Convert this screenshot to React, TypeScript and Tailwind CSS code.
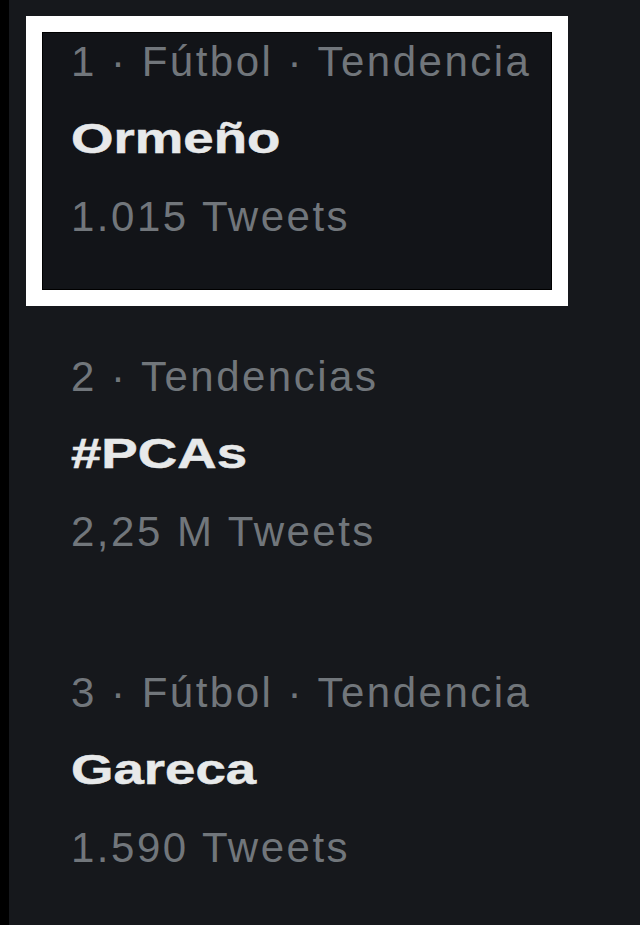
import * as React from 'react'

type Trend = {
  meta: string
  name: string
  count: string
}

const TRENDS: Trend[] = [
  { meta: '1 · Fútbol · Tendencia', name: 'Ormeño', count: '1.015 Tweets' },
  { meta: '2 · Tendencias', name: '#PCAs', count: '2,25 M Tweets' },
  { meta: '3 · Fútbol · Tendencia', name: 'Gareca', count: '1.590 Tweets' },
]

function TrendItem({ trend }: { trend: Trend }) {
  return (
    <div className="flex flex-col whitespace-nowrap">
      <div className="text-[42px] leading-[48px] tracking-[2.5px] text-[#71767b]">{trend.meta}</div>
      <div className="mt-[29px] origin-left scale-x-[1.3] text-[42px] font-bold leading-[48px] text-[#e7e9ea] [-webkit-text-stroke:0.5px_#e7e9ea]">
        {trend.name}
      </div>
      <div className="mt-[30px] text-[42px] leading-[48px] tracking-[2.5px] text-[#71767b]">{trend.count}</div>
    </div>
  )
}

export default function App() {
  const [first, ...rest] = TRENDS

  return (
    <div
      className="flex min-h-screen overflow-hidden bg-[#16181c]"
      style={{ fontFamily: '"Liberation Sans", Arial, sans-serif' }}
    >
      {/* window edge */}
      <div className="w-[9px] shrink-0 bg-black" />

      <div className="flex-1 pl-[17px] pt-4">
        {/* highlighted trend */}
        <div className="w-[542px] border-[16px] border-white bg-[#121418] pb-[49px] pl-[29px] pt-[6px] shadow-[inset_0_0_0_1px_#000]">
          <TrendItem trend={first} />
        </div>

        <div className="mt-[47px] flex flex-col gap-[113px] pl-[45px]">
          {rest.map((t) => (
            <TrendItem key={t.name} trend={t} />
          ))}
        </div>
      </div>
    </div>
  )
}
